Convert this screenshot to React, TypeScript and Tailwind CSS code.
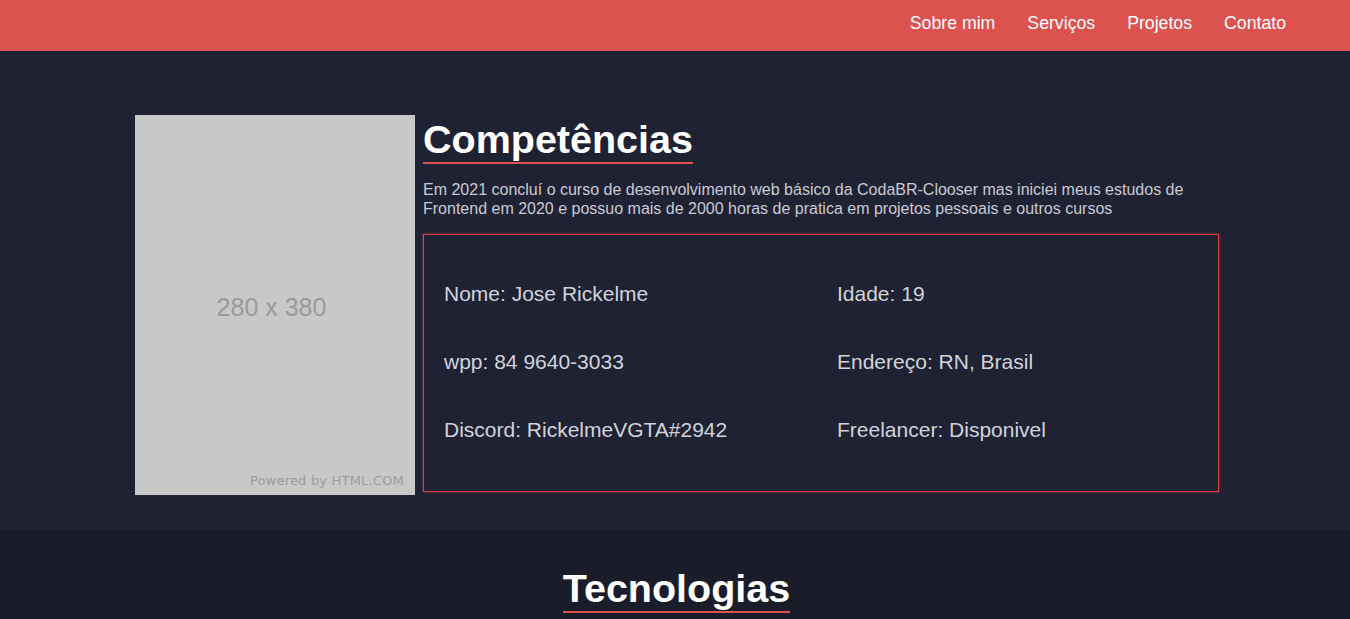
const navLinks = ["Sobre mim", "Serviços", "Projetos", "Contato"];

const infoRows = [
  ["Nome: Jose Rickelme", "Idade: 19"],
  ["wpp: 84 9640-3033", "Endereço: RN, Brasil"],
  ["Discord: RickelmeVGTA#2942", "Freelancer: Disponivel"],
];

const Header = () => (
  <header className="h-[51px] bg-[#db524f] flex items-center justify-end pr-[64px]">
    <nav className="flex gap-[32px] -mt-[5px]">
      {navLinks.map((link) => (
        <a key={link} href="#" className="text-[17.7px] text-white">
          {link}
        </a>
      ))}
    </nav>
  </header>
);

// placeholder de imagem 280x380
const Placeholder = () => (
  <div className="relative w-[280px] h-[380px] bg-[#c8c8c8] flex items-center justify-center shrink-0">
    <span className="text-[25px] text-[#9a9a9a] mt-[6px] -ml-[7px]">280 x 380</span>
    <span className="absolute right-[11px] bottom-[5px] text-[13px] text-[#9c9c9c] font-['DejaVu_Sans',sans-serif] tracking-[0.2px]">
      Powered by HTML.COM
    </span>
  </div>
);

const About = () => (
  <section className="bg-[#1f2233] pt-[64px] pb-[35px] pl-[135px]">
    <div className="flex gap-[8px]">
      <Placeholder />
      <div className="w-[796px]">
        <h2 className="inline-block text-[39.5px] font-bold text-white leading-[44px] pt-[2px] pb-[1px] border-b-2 border-[#db524f]">
          Competências
        </h2>
        <p className="mt-[16px] text-[16px] leading-[19px] text-[#c9cad3]">
          Em 2021 concluí o curso de desenvolvimento web básico da CodaBR-Clooser mas iniciei meus estudos de
          Frontend em 2020 e possuo mais de 2000 horas de pratica em projetos pessoais e outros cursos
        </p>
        <div className="mt-[16px] h-[258px] border border-[#e0413f] shadow-[0_0_3px_rgba(224,65,63,0.6)] py-[25px] pl-[20px]">
          {infoRows.map(([left, right]) => (
            <div key={left} className="grid grid-cols-[393px_1fr] h-[68px] items-center">
              <span className="text-[21px] text-[#d2d3da]">{left}</span>
              <span className="text-[21px] text-[#d2d3da]">{right}</span>
            </div>
          ))}
        </div>
      </div>
    </div>
  </section>
);

const Technologies = () => (
  <section className="bg-[#1b1c29] pt-[34px] flex justify-center min-h-[200px]">
    <div>
      <h2 className="inline-block text-[39.5px] font-bold text-white leading-[44px] pt-[2px] pb-[1px] border-b-2 border-[#db524f] ml-[3px]">
        Tecnologias
      </h2>
    </div>
  </section>
);

export default function App() {
  return (
    <div className="min-h-screen bg-[#1b1c29] font-['Liberation_Sans',Arial,sans-serif]">
      <Header />
      <About />
      <Technologies />
    </div>
  );
}
